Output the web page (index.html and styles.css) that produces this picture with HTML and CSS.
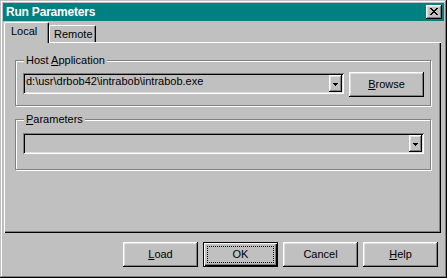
FILE: index.html
```html
<!DOCTYPE html>
<html>
<head>
<meta charset="utf-8">
<title>Run Parameters</title>
<link rel="stylesheet" href="styles.css">
</head>
<body>
<div class="window">
  <div class="titlebar">
    <span class="title">Run Parameters</span>
    <button class="close" aria-label="Close"><svg width="8" height="7" viewBox="0 0 8 7" shape-rendering="crispEdges"><path d="M0 0h2v1H0z M6 0h2v1H6z M1 1h2v1H1z M5 1h2v1H5z M2 2h4v1H2z M3 3h2v1H3z M2 4h4v1H2z M1 5h2v1H1z M5 5h2v1H5z M0 6h2v1H0z M6 6h2v1H6z" fill="#000"/></svg></button>
  </div>
  <div class="tabs">
    <div class="tab active">Local</div>
    <div class="tab">Remote</div>
  </div>
  <div class="panel">
    <fieldset class="group host">
      <legend>Host <u>A</u>pplication</legend>
      <div class="row">
        <div class="combo host-combo">
          <span class="value">d:\usr\drbob42\intrabob\intrabob.exe</span>
          <span class="drop"><svg width="5" height="3" viewBox="0 0 5 3" shape-rendering="crispEdges"><path d="M0 0h5v1H0z M1 1h3v1H1z M2 2h1v1H2z" fill="#000"/></svg></span>
        </div>
        <button class="btn"><u>B</u>rowse</button>
      </div>
    </fieldset>
    <fieldset class="group params">
      <legend><u>P</u>arameters</legend>
      <div class="combo params-combo">
        <span class="value"></span>
        <span class="drop"><svg width="5" height="3" viewBox="0 0 5 3" shape-rendering="crispEdges"><path d="M0 0h5v1H0z M1 1h3v1H1z M2 2h1v1H2z" fill="#000"/></svg></span>
      </div>
    </fieldset>
  </div>
  <div class="buttons">
    <button class="btn"><u>L</u>oad</button>
    <button class="btn default"><span class="focus">OK</span></button>
    <button class="btn">Cancel</button>
    <button class="btn"><u>H</u>elp</button>
  </div>
</div>
</body>
</html>
```

FILE: styles.css
```css
* { box-sizing: border-box; }
html, body {
  margin: 0;
  padding: 0;
  background: #c0c0c0;
}
body {
  font-family: "Liberation Sans", Arial, sans-serif;
  font-size: 11px;
  color: #000;
}
u { text-decoration: underline; text-underline-offset: 1px; }

.window {
  width: 447px;
  height: 278px;
  padding: 3px;
  background: #c0c0c0;
  box-shadow: inset -1px -1px #000, inset 1px 1px #c0c0c0, inset -2px -2px #808080, inset 2px 2px #fff;
  display: flex;
  flex-direction: column;
}

.titlebar {
  height: 18px;
  background: #008080;
  display: flex;
  align-items: center;
  justify-content: space-between;
  padding: 0 2px 0 3px;
}
.title {
  color: #fff;
  font-weight: bold;
  font-size: 12px;
  letter-spacing: -0.2px;
  line-height: 18px;
}
.close {
  width: 16px;
  height: 14px;
  padding: 0;
  border: 0;
  background: #c0c0c0;
  box-shadow: inset -1px -1px #000, inset 1px 1px #fff, inset -2px -2px #808080, inset 2px 2px #dfdfdf;
  display: flex;
  align-items: center;
  justify-content: center;
}
.close svg { display: block; margin: 0 1px 1px 0; }

.tabs {
  margin-top: 1px;
  height: 20px;
  padding-left: 1px;
  display: flex;
  align-items: flex-end;
}
.tab {
  background: #c0c0c0;
  border-left: 1px solid #fff;
  border-top: 1px solid #fff;
  border-right: 1px solid #000;
  box-shadow: inset -1px 0 #808080;
  border-radius: 2px 2px 0 0;
  line-height: 13px;
  height: 17px;
  width: 47px;
  padding: 2px 0 0 4px;
}
.tab.active {
  position: relative;
  z-index: 1;
  height: 21px;
  width: 45px;
  margin-bottom: -1px;
  padding: 2px 0 0 6px;
}

.panel {
  margin-left: 1px;
  width: 437px;
  height: 191px;
  box-shadow: inset 1px 1px #fff, inset -1px -1px #000, inset -2px -2px #808080;
  padding: 12px 0 0 11px;
}

.group {
  margin: 0;
  width: 416px;
  border: 1px solid #808080;
  box-shadow: inset 1px 1px #fff, 1px 1px #fff;
  min-width: 0;
}
.group legend {
  margin-left: 1px;
  padding: 0 2px;
  line-height: 13px;
  background: #c0c0c0;
}
.group.host { padding: 5px 6px 8px 7px; }
.group.params { margin-top: 7px; padding: 7px 6px 15px 7px; }

.row {
  display: flex;
  align-items: flex-start;
  gap: 5px;
}

.combo {
  height: 21px;
  padding: 2px;
  display: flex;
  background: #c0c0c0;
  box-shadow: inset 1px 1px #808080, inset -1px -1px #fff, inset 2px 2px #000, inset -2px -2px #dfdfdf;
}
.host-combo { width: 321px; margin-top: 1px; }
.params-combo { width: 401px; }
.combo .value {
  flex: 1;
  padding-left: 1px;
  line-height: 13px;
  white-space: nowrap;
  overflow: hidden;
}
.combo .drop {
  width: 13px;
  height: 17px;
  padding-top: 2px;
  background: #c0c0c0;
  box-shadow: inset -1px -1px #000, inset 1px 1px #fff, inset -2px -2px #808080, inset 2px 2px #dfdfdf;
  display: flex;
  align-items: center;
  justify-content: center;
}
.combo .drop svg { display: block; }

.btn {
  width: 75px;
  height: 25px;
  padding: 0;
  border: 0;
  background: #c0c0c0;
  font: inherit;
  color: #000;
  line-height: 25px;
  text-align: center;
  box-shadow: inset -1px -1px #000, inset 1px 1px #fff, inset -2px -2px #808080, inset 2px 2px #dfdfdf;
}

.buttons {
  margin-top: 9px;
  display: flex;
  justify-content: flex-end;
  gap: 5px;
  padding-right: 6px;
}
.btn.default {
  border: 1px solid #000;
  padding: 3px;
  display: flex;
  box-shadow: inset 1px 1px #fff, inset -1px -1px #000, inset -2px -2px #808080;
}
.btn.default .focus {
  flex: 1;
  border: 1px dotted #000;
  line-height: 15px;
}
```
